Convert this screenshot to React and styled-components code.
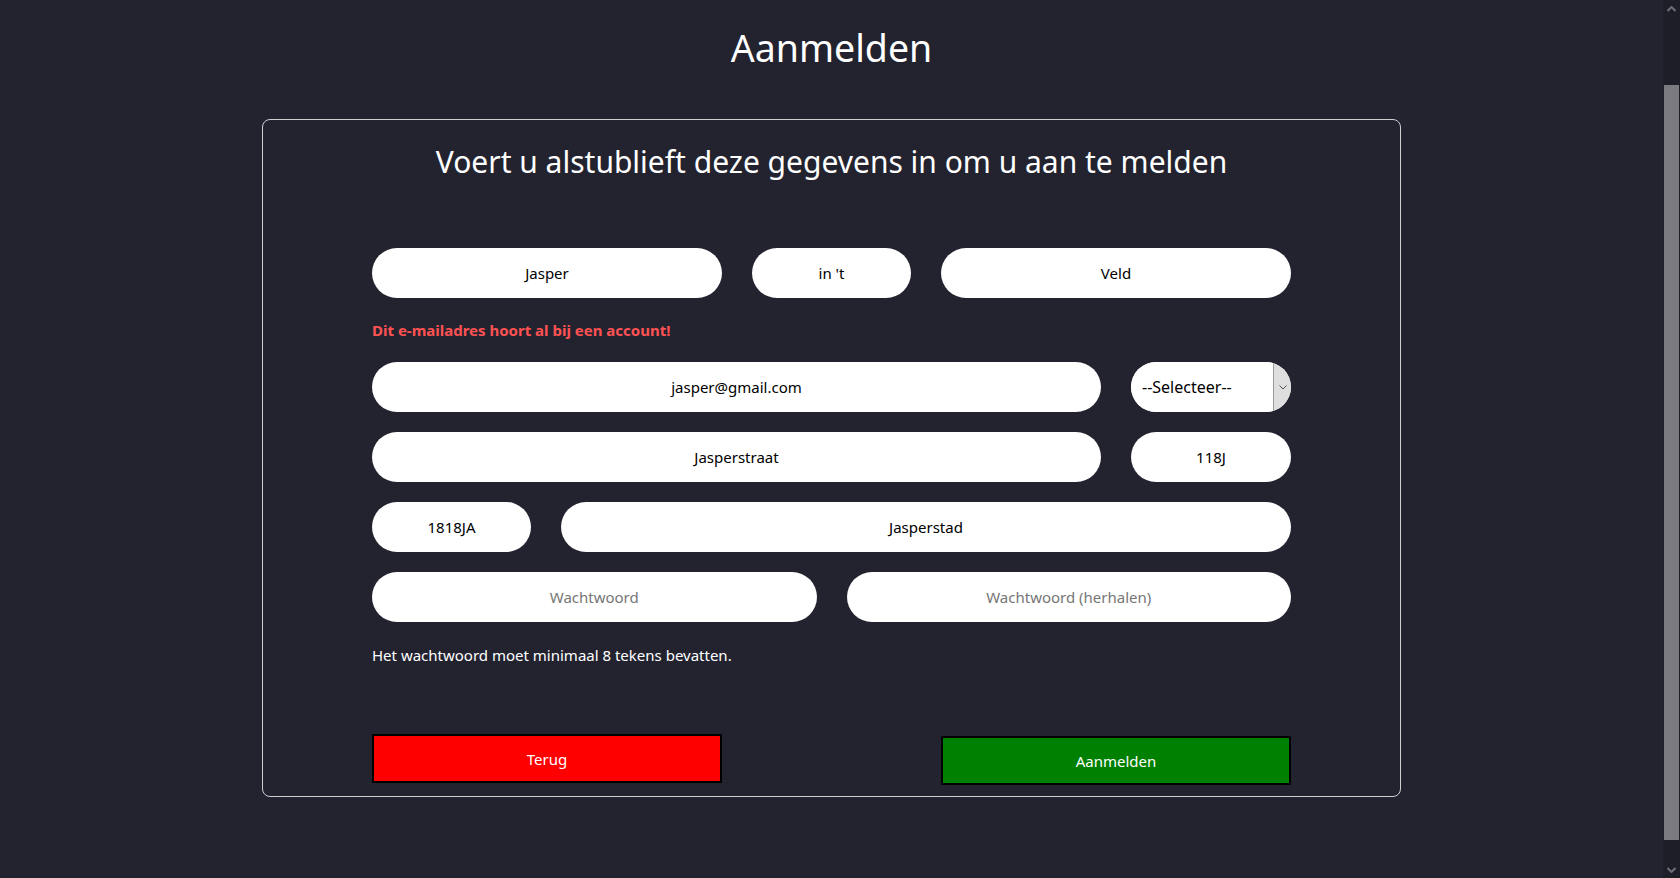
import React from 'react'
import styled, { createGlobalStyle } from 'styled-components'

const GlobalStyle = createGlobalStyle`
  body {
    margin: 0;
    background-color: #232330;
    font-family: "Segoe UI", "Noto Sans", sans-serif;
    color: white;
    overflow: hidden;
  }
`

const Shell = styled.div`
  display: flex;
  height: 100vh;
`

const Page = styled.div`
  flex: 1;
  display: flex;
  flex-direction: column;
  align-items: center;
`

/* nagebootste schuifbalk rechts */
const ScrollBar = styled.div`
  width: 17px;
  display: flex;
  flex-direction: column;
  background: #1e1e28;
`

const ScrollButton = styled.div`
  height: 17px;
  display: flex;
  align-items: center;
  justify-content: center;
`

const Track = styled.div`
  flex: 1;
  display: flex;
  flex-direction: column;
  padding: 68px 1px 21px;
`

const Thumb = styled.div`
  flex: 1;
  background: #7a7a80;
`

const Title = styled.h1`
  font-size: 37.5px;
  line-height: 54px;
  font-weight: 400;
  margin: 21px 0 44px;
`

const Card = styled.div`
  width: 1137px;
  border: 1px solid #cfcfcf;
  border-radius: 8px;
  padding: 20px 0 11px;
  display: flex;
  flex-direction: column;
  align-items: center;
`

const Subtitle = styled.h2`
  font-size: 30px;
  line-height: 44px;
  font-weight: 400;
  margin: 0 0 64px;
`

const Form = styled.form`
  width: 919px;
  display: flex;
  flex-direction: column;
  gap: 20px;
`

const Row = styled.div`
  display: flex;
  gap: 30px;
`

const Input = styled.input`
  height: 50px;
  box-sizing: border-box;
  border: none;
  border-radius: 25px;
  background: white;
  color: black;
  font-family: inherit;
  font-size: 15px;
  text-align: center;
  outline: none;
  padding: 0 12px;
  min-width: 0;
  flex: ${p => (p.$w ? `0 0 ${p.$w}px` : '1 1 0')};
  &::placeholder {
    color: #767676;
  }
`

const SelectBox = styled.div`
  flex: 0 0 160px;
  height: 50px;
  display: flex;
  background: white;
  border-radius: 25px;
  overflow: hidden;
`

const Select = styled.select`
  flex: 1;
  min-width: 0;
  appearance: none;
  border: none;
  background: white;
  color: black;
  font-family: inherit;
  font-size: 16px;
  padding: 0 0 0 11px;
  outline: none;
`

const Arrow = styled.div`
  width: 17px;
  background: #dedede;
  border-left: 1px solid #9a9a9a;
  display: flex;
  align-items: center;
  justify-content: center;
`

const ErrorText = styled.p`
  margin: 0;
  padding-top: 1px;
  font-size: 15px;
  line-height: 23px;
  font-weight: 700;
  color: #ff5252;
`

const Hint = styled.p`
  margin: 0;
  padding-top: 1px;
  font-size: 15px;
  line-height: 24px;
`

const Buttons = styled.div`
  width: 919px;
  margin-top: 67px;
  display: flex;
  justify-content: space-between;
  align-items: flex-start;
`

const Button = styled.button`
  width: 350px;
  height: 49px;
  margin-top: ${p => p.$drop || 0}px;
  border: 2px solid black;
  background-color: ${p => p.$bg};
  color: white;
  font-family: inherit;
  font-size: 15px;
  cursor: pointer;
`

const Chevron = ({ up }) => (
  <svg width="9" height="6" viewBox="0 0 9 6">
    <path
      d={up ? 'M0.5 5 L4.5 1 L8.5 5' : 'M0.5 1 L4.5 5 L8.5 1'}
      fill="none"
      stroke="#6e6e76"
      strokeWidth="2"
    />
  </svg>
)

const App = () => {
  return (
    <Shell>
      <GlobalStyle />
      <Page>
        <Title>Aanmelden</Title>
        <Card>
          <Subtitle>Voert u alstublieft deze gegevens in om u aan te melden</Subtitle>
          <Form>
            <Row>
              <Input defaultValue="Jasper" />
              <Input $w={159} defaultValue="in 't" />
              <Input defaultValue="Veld" />
            </Row>
            <ErrorText>Dit e-mailadres hoort al bij een account!</ErrorText>
            <Row>
              <Input defaultValue="jasper@gmail.com" />
              <SelectBox>
                <Select defaultValue="">
                  <option value="">--Selecteer--</option>
                </Select>
                <Arrow>
                  <svg width="8" height="5" viewBox="0 0 8 5">
                    <path d="M0.5 0.5 L4 4 L7.5 0.5" fill="none" stroke="#555" strokeWidth="1" />
                  </svg>
                </Arrow>
              </SelectBox>
            </Row>
            <Row>
              <Input defaultValue="Jasperstraat" />
              <Input $w={160} defaultValue="118J" />
            </Row>
            <Row>
              <Input $w={159} defaultValue="1818JA" />
              <Input defaultValue="Jasperstad" />
            </Row>
            <Row>
              <Input type="password" placeholder="Wachtwoord" />
              <Input type="password" placeholder="Wachtwoord (herhalen)" />
            </Row>
            <Hint>Het wachtwoord moet minimaal 8 tekens bevatten.</Hint>
          </Form>
          <Buttons>
            <Button type="button" $bg="#ff0000">Terug</Button>
            <Button type="button" $bg="#008000" $drop={2}>Aanmelden</Button>
          </Buttons>
        </Card>
      </Page>
      <ScrollBar>
        <ScrollButton><Chevron up /></ScrollButton>
        <Track><Thumb /></Track>
        <ScrollButton><Chevron /></ScrollButton>
      </ScrollBar>
    </Shell>
  )
}

export default App
